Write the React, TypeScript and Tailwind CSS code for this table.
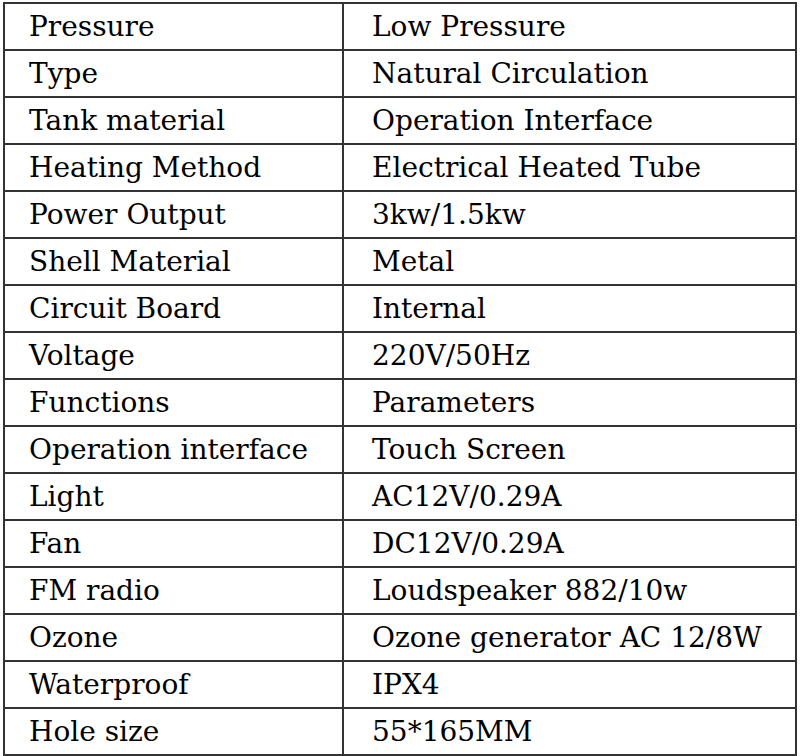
const rows: [string, string][] = [
  ['Pressure', 'Low Pressure'],
  ['Type', 'Natural Circulation'],
  ['Tank material', 'Operation Interface'],
  ['Heating Method', 'Electrical Heated Tube'],
  ['Power Output', '3kw/1.5kw'],
  ['Shell Material', 'Metal'],
  ['Circuit Board', 'Internal'],
  ['Voltage', '220V/50Hz'],
  ['Functions', 'Parameters'],
  ['Operation interface', 'Touch Screen'],
  ['Light', 'AC12V/0.29A'],
  ['Fan', 'DC12V/0.29A'],
  ['FM radio', 'Loudspeaker 882/10w'],
  ['Ozone', 'Ozone generator AC 12/8W'],
  ['Waterproof', 'IPX4'],
  ['Hole size', '55*165MM'],
]

export default function App() {
  return (
    <div className="w-[800px] h-[756px] bg-white pt-[2px] pl-[3px]">
      <table className="w-[794px] border-collapse font-['DejaVu_Serif',serif] text-[28px] text-black">
        <tbody>
          {rows.map(([k, v]) => (
            <tr key={k} className="h-[47px]">
              <td className="w-[339px] border-2 border-[#333] pl-[24px] leading-[43px]">{k}</td>
              <td className="border-2 border-[#333] pl-[28px] leading-[43px]">{v}</td>
            </tr>
          ))}
        </tbody>
      </table>
    </div>
  )
}
